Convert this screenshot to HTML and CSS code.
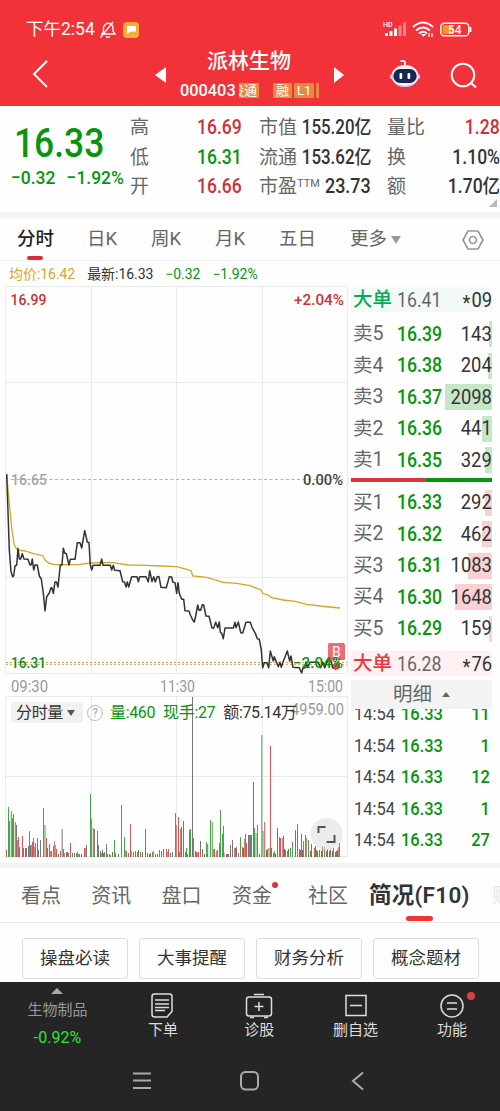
FILE: index.html
```html
<!DOCTYPE html>
<html lang="zh-CN">
<head>
<meta charset="utf-8">
<title>派林生物 000403</title>
<link rel="stylesheet" href="styles.css">
</head>
<body>
<header class="header">
  <div class="status">
    <span class="clock">下午2:54</span>
    <svg class="mute" width="18" height="18" viewBox="0 0 18 18" fill="none" stroke="#fff" stroke-width="1.3"><path d="M3 13h13l-2-3V7a4.600 4.600 0 0 0-8-3.200L4.500 6v4L3 13zM1.500 16.500 14 1M7 15.500q2 1.500 4 0"/></svg>
    <svg width="16" height="16" viewBox="0 0 16 16"><rect width="16" height="16" rx="4" fill="#fbac38"/><path d="M4 4h9v5.500H8L4 12z" fill="#fff"/></svg>
    <svg class="signals" width="92" height="20" viewBox="0 0 92 20">
      <text x="0" y="7" class="hd">HD</text>
      <g fill="#fff"><rect x="2" y="13" width="3" height="3"/><rect x="6.500" y="11" width="3" height="5"/><rect x="11" y="8.500" width="3" height="7.500"/></g>
      <g fill="#fff" opacity=".4"><rect x="15.500" y="5.500" width="3" height="10.500"/><rect x="20" y="2.500" width="3" height="13.500"/></g>
      <g fill="none" stroke="#fff" stroke-width="2"><path d="M30 7q10-9 20 0M33 10.500q7-6 14 0M36 13.500q4-3.500 8 0"/></g><path d="m38 14 2.500 3 2.500-3z" fill="#fff"/><path d="M46 13v4M49 13v4" stroke="#fff" stroke-width="1.200"/>
      <rect x="57.800" y="3.200" width="28" height="12.500" rx="3.500" fill="none" stroke="#fff" stroke-width="1.400"/><path d="M61 5h9v9h-9q-1.500 0-1.500-2V7q0-2 1.500-2z" fill="#f8981d"/><path d="M87.500 7v5" stroke="#fff" stroke-width="1.800"/>
      <text x="65" y="14" class="batt">54</text>
    </svg>
  </div>
  <div class="titlebar">
    <svg class="back" width="18" height="28" viewBox="0 0 18 28" fill="none" stroke="#fff" stroke-width="2"><path d="M15 1 2 14l13 13"/></svg>
    <svg class="prev" width="11" height="16" viewBox="0 0 11 16"><path d="M11 0v16L0 8z" fill="#fff"/></svg>
    <div class="name">
      <h1>派林生物</h1>
      <div class="code"><span class="codenum">000403</span><span class="tag cut"><i>股通</i></span><span class="tag gap">融</span><span class="tag">L1</span><span class="tag sliver"></span></div>
    </div>
    <svg class="next" width="11" height="16" viewBox="0 0 11 16"><path d="M0 0v16l10-8z" fill="#fff"/></svg>
    <svg class="robot" width="32" height="30" viewBox="0 0 32 30"><path d="M11.500 2.200q4-1.200 4.500 1.300v4" fill="none" stroke="#fff" stroke-width="1.800"/><ellipse cx="16" cy="17" rx="13.500" ry="11" fill="#f7f0fb"/><circle cx="3.500" cy="17.500" r="2.600" fill="#d8c3ef"/><circle cx="28.500" cy="17.500" r="2.600" fill="#e9c9f0"/><path d="M6 24q10 6 20 0-3 4-10 4T6 24" fill="#c5b5ef"/><rect x="4.500" y="10" width="23" height="14" rx="6.500" fill="#192650"/><rect x="10.500" y="14" width="2.700" height="6" rx="1" fill="#fff"/><rect x="18.500" y="14" width="2.700" height="6" rx="1" fill="#fff"/></svg>
    <svg class="search" width="28" height="28" viewBox="0 0 28 28" fill="none" stroke="#fff" stroke-width="2"><circle cx="13" cy="13" r="11.300"/><path d="m20.500 20.500 5.500 5"/></svg>
  </div>
</header>

<section class="quote">
  <div class="price"><div class="last"><b>16.33</b></div><div class="chg"><span>−0.32</span><span>−1.92%</span></div></div>
  <div class="stat s1"><p>高<b class="red">16.69</b></p><p>低<b class="green">16.31</b></p><p>开<b class="red">16.66</b></p></div>
  <div class="stat s2"><p>市值<b>155.20亿</b></p><p>流通<b>153.62亿</b></p><p><span>市盈<sup>TTM</sup></span><b>23.73</b></p></div>
  <div class="stat s3"><p>量比<b class="red">1.28</b></p><p>换<b>1.10%</b></p><p>额<b>1.70亿</b></p></div>
  <i class="corner"></i>
</section>

<nav class="periods">
  <span class="on">分时</span><span>日K</span><span>周K</span><span>月K</span><span>五日</span><span class="more">更多<i></i></span>
  <svg width="22" height="20" viewBox="0 0 22 20" fill="none" stroke="#999" stroke-width="1.700"><path d="M6 1h10l5 9-5 9H6L1 10z"/><circle cx="11" cy="10" r="3.500"/></svg>
</nav>
<div class="info"><span class="gold">均价:16.42</span><span>最新:16.33</span><span class="green">−0.32</span><span class="green">−1.92%</span></div>

<main class="market">
  <div class="charts">
    <svg width="350" height="578" viewBox="0 285 350 578">
      <g class="grid"><path d="M5.500 286.500h342v387H5.500zM5.500 382.500h342M5.500 577.500h342M91.500 286v387M176.500 286v387M262.500 286v387M5.500 696.500h342v160H5.500zM5.500 776.500h342M91.500 697v160M176.500 697v160M262.500 697v160"/></g>
      <path d="M11 479.500h332" stroke="#b2b2b2" stroke-dasharray="3 2.500"/>
      <path d="M6 662.500h341" stroke="#d89a5b" stroke-dasharray="2 2"/><path d="M6 664.500h341" stroke="#c8b578" stroke-dasharray="2 2"/>
      <polyline class="avg" points="6.700,474 9.300,503 11.700,528 14.300,545 17.300,550 25,551 33.300,553.700 42.700,555.700 45,560 49.300,563.300 55,564.700 78.300,564.700 90,563 100,562.700 113,562.700 128.300,565 146.700,565.300 162,566 176.700,566.700 186.700,569.300 191,570.700 192.700,576 206.700,577.300 223.300,582.300 236.700,583.300 250,585.700 260.700,589.700 262.700,593.300 269,595.300 270.700,597.300 283.300,600 295,601.300 306.700,604.300 320,606 340,608"/>
      <polyline class="trend" points="6.700,474.300 9.300,550 11,571.700 12.700,576.700 13.700,576 15,566 16.700,565 18,548.300 19.300,559 20.700,559 22.300,553.700 24,559 28,559.300 30,565 31.300,564.700 32.300,559 33.700,570 35,565 37.300,565 39.300,576 41.300,579 43.300,593 45,611 46.700,596.700 49.300,593 51,587.700 52,588 53.300,593.300 55,582 56.500,582 58,587 60.300,565 62,565 63.300,548.300 64.700,553 66.300,553.700 69,565 70.300,559.300 75,559.300 77.300,542.700 80,542.700 81.700,548 84.700,530.700 87.300,542 89,542.700 90.300,565 91.700,570 93,565.300 100,565.300 101.700,559 103,565.300 110.300,565.300 111.700,570 113.300,565.300 114.700,570.300 120,570.700 122.700,581.700 124.500,582 126,587 127.300,582 128.700,587 131.700,576.700 137,576.700 138.300,581.700 139.700,576.700 146,576.700 148.300,582 149.700,570.700 152,581.700 153.700,576.700 155.300,582 157.300,576.500 159,576.700 161,587.300 166.300,587.700 169.300,576.700 171.700,577 172.700,582 175,582.700 176.700,593.300 178,582.700 179.300,593.300 181.700,599.300 183.700,599.300 185,610.700 189,611 190.700,615.700 192.700,620 194.300,622 195.700,616 197.700,605 199,610.300 200.700,610.300 202.300,604.700 203.700,605 206,616 209,616.300 212,628 213.700,628 215.700,622.300 217.700,627.700 219.300,622 220.300,632.300 221.700,633.300 223.300,638.700 225,628 233.300,628 235,622.300 236,627.700 238.300,622 240.700,632.700 242.700,633 246,622.300 250.300,622.300 252,627.300 255.300,633.300 257.300,638.700 259.300,639.300 261.300,650 262.700,667.700 264.300,662.700 267,662.700 268.700,667.700 270.300,651 272,656.700 273.300,661 274.300,656.700 276.700,662.700 278.300,666.700 280,662.300 281.300,667.300 283,662 285,657 287.300,651 288.700,656.700 289.700,661 291,656 293,667.300 299.300,667.700 301.700,673 303,668 304.500,668 306,662 307.300,667.700 310,662.300 318,662.300 320.700,667.700 322.700,662.300 324.700,667.700 327,662.300 330,656.700 332.700,667.700 335.700,669 338,662.300"/>
      <g class="axis">
        <text x="10.500" y="305" fill="#cf3038" textLength="36" lengthAdjust="spacingAndGlyphs">16.99</text><text x="294" y="305" fill="#cf3038" textLength="50" lengthAdjust="spacingAndGlyphs">+2.04%</text>
        <text x="11" y="484.500" fill="#a5a5a5" textLength="36" lengthAdjust="spacingAndGlyphs">16.65</text><text x="303" y="484.500" fill="#444" textLength="40" lengthAdjust="spacingAndGlyphs">0.00%</text>
        <text x="11" y="667.500" fill="#079510" textLength="35" lengthAdjust="spacingAndGlyphs">16.31</text>
        <rect x="328" y="643" width="17" height="17" rx="1.500" fill="#ee6c73"/><circle cx="336.500" cy="666" r="3.500" fill="#ee3d43"/><text x="332" y="656.500" fill="#fff" class="buymark">B</text>
        <text x="293" y="667.500" fill="#079510" textLength="50" lengthAdjust="spacingAndGlyphs">−2.04%</text>
        <g fill="#999" class="times"><text x="11" y="692" textLength="37" lengthAdjust="spacingAndGlyphs">09:30</text><text x="160" y="692" textLength="35" lengthAdjust="spacingAndGlyphs">11:30</text><text x="308" y="692" textLength="35" lengthAdjust="spacingAndGlyphs">15:00</text><text x="291" y="715" textLength="53" lengthAdjust="spacingAndGlyphs">4959.00</text></g>
      </g>
      <g class="bars">
        <path stroke="#49a549" d="M8.500 857v-50M9.500 857v-36M11.300 857v-46M12.500 857v-39M13.500 857v-43M29.500 857v-26M33.500 857v-19M37.500 857v-19M43.500 857v-49M45 857v-32M53.500 857v-11M67.500 857v-5M76.500 857v-4M90.500 857v-63M91.600 857v-38M104.500 857v-5M114.500 857v-17M121.500 857v-52M124.500 857v-20M133.500 857v-5M138.500 857v-7M152.500 857v-5M159.500 857v-7M161.500 857v-6M179.500 857v-5M186.500 857v-9M190.500 857v-28M193.500 857v-19M206.500 857v-15M210.500 857v-37M212.300 857v-35M220.500 857v-47M222.500 857v-23M223.500 857v-31M240.500 857v-20M249.500 857v-22M254.500 857v-29M256 857v-24M257.500 857v-32M261.800 857v-122M263 857v-26M269 857v-9M274.500 857v-6M279.500 857v-20M290.500 857v-9M292.500 857v-15M301.500 857v-23M303.500 857v-16M308.500 857v-17M316.500 857v-7M324.500 857v-10M333.500 857v-9M339.500 857v-14"/>
        <path stroke="#d4575a" d="M6.500 857v-7M15.300 857v-35M18.500 857v-20M22.500 857v-21M32.500 857v-15M35.500 857v-14M46.500 857v-19M49.500 857v-13M51.500 857v-6M56.500 857v-8M60.500 857v-6M63.500 857v-8M70.500 857v-14M77.500 857v-5M84.500 857v-9M93.300 857v-29M103.500 857v-4M107.500 857v-3M115.500 857v-4M126.500 857v-6M130.500 857v-33M135.500 857v-6M140.500 857v-5M150.500 857v-4M155.500 857v-3M166.500 857v-8M168.500 857v-8M175.500 857v-44M178.500 857v-40M185.500 857v-5M196.500 857v-5M198.500 857v-5M202.500 857v-8M207.500 857v-3M214.500 857v-8M217.500 857v-7M219.500 857v-14M226.500 857v-3M235.500 857v-9M242.500 857v-10M245.500 857v-23M246.500 857v-14M251.500 857v-22M264.700 857v-35M267.500 857v-8M270.500 857v-111M280.500 857v-19M283.500 857v-21M287.500 857v-6M300.500 857v-7M305.500 857v-22M314.500 857v-9M322.500 857v-11M330.500 857v-8"/>
        <path stroke="#777" d="M16.500 857v-32M19.500 857v-10M23.500 857v-9M25.500 857v-9M26.500 857v-9M28.500 857v-11M30.500 857v-12M38.500 857v-7M40.500 857v-17M47.500 857v-9M58.500 857v-3M62.200 857v-28M66.500 857v-5M72.500 857v-4M79.500 857v-3M86.500 857v-12M94.500 857v-28M97.500 857v-26M98.500 857v-12M102.500 857v-7M106.500 857v-13M109.500 857v-3M118.500 857v-3M128.500 857v-4M137.500 857v-5M142.500 857v-5M145.500 857v-28M147.500 857v-4M163.500 857v-8M172.500 857v-5M181.500 857v-30M183.500 857v-36M189.500 857v-27M192.500 857V697M195.500 857v-6M200.500 857v-16M207.700 857v-13M224 857v-4M228.500 857v-3M230.500 857v-12M232.500 857v-17M236.500 857v-10M238.500 857v-4M248.500 857v-22M250.500 857v-22M253.500 857v-75M259.500 857v-3M271.500 857v-9M273.500 857v-4M277.500 857v-29M285.500 857v-7M295.500 857v-27M297.500 857v-33M311.500 857v-13M315.500 857v-11M319.500 857v-7M327.500 857v-8M336.500 857v-6"/>
        <path stroke="#df8175" d="M17.500 857v-17M31.500 857v-12M34.500 857v-10M50.500 857v-6M54.500 857v-16M55.500 857v-12M64.500 857v-4M78.500 857v-3M85.500 857v-9M101.500 857v-4M110.500 857v-2M125.500 857v-7M131.500 857v-6M153.500 857v-6M167.500 857v-5M176.500 857v-32M180.500 857v-28M197.500 857v-4M213.500 857v-8M216.500 857v-6M234.500 857v-9M244.500 857v-18M282.500 857v-19M306.500 857v-19M338.500 857v-10"/>
        <path stroke="#697969" d="M68.500 857v-4M74.500 857v-4M81.500 857v-3M100.500 857v-6M112.500 857v-5M149.500 857v-3M157.500 857v-3M170.500 857v-4M187.500 857v-3M204.500 857v-3M227.500 857v-3M243.500 857v-9M266.500 857v-7M275.500 857v-3M284.500 857v-8M288.500 857v-8M299.500 857v-8M302.500 857v-7M310.500 857v-6M317.500 857v-6M321.500 857v-6M326.500 857v-6M329.500 857v-6M332.500 857v-6M335.500 857v-5M337.500 857v-7"/>
      </g>
      <circle cx="326.500" cy="834" r="16" fill="#ddd" opacity=".55"/><path d="M318.500 833v-6h7M334.500 835v7h-8" fill="none" stroke="#555" stroke-width="2"/>
    </svg>
    <div class="volbar"><span class="pick">分时量<i></i></span><span class="help">?</span><span class="green">量:460</span><span class="green">现手:27</span><span>额:75.14万</span></div>
  </div>
  <aside class="book">
    <div class="row big sell"><span>大单</span><b>16.41</b><em><u>*</u>09</em></div>
    <div class="levels asks">
      <div class="row"><span>卖5</span><b>16.39</b><em>143</em><i style="width:3px"></i></div>
      <div class="row"><span>卖4</span><b>16.38</b><em>204</em><i style="width:4px"></i></div>
      <div class="row"><span>卖3</span><b>16.37</b><em>2098</em><i style="width:47px"></i></div>
      <div class="row"><span>卖2</span><b>16.36</b><em>441</em><i style="width:10px"></i></div>
      <div class="row"><span>卖1</span><b>16.35</b><em>329</em><i style="width:7px"></i></div>
    </div>
    <div class="ratio"></div>
    <div class="levels bids">
      <div class="row"><span>买1</span><b>16.33</b><em>292</em><i style="width:7px"></i></div>
      <div class="row"><span>买2</span><b>16.32</b><em>462</em><i style="width:10px"></i></div>
      <div class="row"><span>买3</span><b>16.31</b><em>1083</em><i style="width:24px"></i></div>
      <div class="row"><span>买4</span><b>16.30</b><em>1648</em><i style="width:37px"></i></div>
      <div class="row"><span>买5</span><b>16.29</b><em>159</em><i style="width:3px"></i></div>
    </div>
    <div class="row big buy"><span>大单</span><b>16.28</b><em><u>*</u>76</em></div>
    <div class="detail">明细<i></i></div>
    <div class="ticks">
      <p><span>14:54</span><b>16.33</b><em>11</em></p><p><span>14:54</span><b>16.33</b><em>1</em></p><p><span>14:54</span><b>16.33</b><em>12</em></p><p><span>14:54</span><b>16.33</b><em>1</em></p><p><span>14:54</span><b>16.33</b><em>27</em></p>
    </div>
  </aside>
</main>

<nav class="sections"><span>看点</span><span>资讯</span><span>盘口</span><span class="dot">资金</span><span class="club">社区</span><span class="on">简况(F10)</span><span class="fade">财务</span></nav>
<div class="chips"><span>操盘必读</span><span>大事提醒</span><span>财务分析</span><span>概念题材</span></div>

<footer class="bottom">
  <div class="tools">
    <div class="sector"><i></i><span>生物制品</span><b>-0.92%</b></div>
    <div class="tool"><svg width="26" height="26" viewBox="0 0 26 26"><path d="M4.500 1h15q2.500 0 2.500 2.500v15L17 24H4.500Q2 24 2 21.500v-18Q2 1 4.500 1zM5 7h14M5 11h14M5 14.500h14M5 17.500h10"/></svg>下单</div>
    <div class="tool"><svg width="28" height="26" viewBox="0 0 28 26"><rect x="1.500" y="4" width="25" height="19" rx="2.500"/><path d="M9 1.500h10M14 9v9M9.500 13.500h9M5 24.500h4M19 24.500h4"/></svg>诊股</div>
    <div class="tool"><svg width="26" height="26" viewBox="0 0 26 26"><path d="M3 2.500h20v20H3zM7 12.500h12"/></svg>删自选</div>
    <div class="tool alert"><svg width="26" height="26" viewBox="0 0 26 26"><circle cx="13" cy="13" r="11"/><path d="M8 10h10M8 16h10"/></svg>功能</div>
  </div>
  <svg class="system" width="500" height="30" viewBox="0 0 500 30"><path d="M133 8.500h18M133 15.500h18M133 23h18"/><rect x="241" y="7" width="17" height="17.500" rx="4.500"/><path d="m363 7.500-10 8.500 10 8.500"/></svg>
</footer>
</body>
</html>
```

FILE: styles.css
```css
* { box-sizing: border-box; }
body { margin: 0; width: 500px; height: 1111px; overflow: hidden; background: #fefefe; color: #333; font-family: Roboto, "Noto Sans CJK SC", sans-serif; font-size: 16px; line-height: 1; }
h1, p { margin: 0; font-weight: 400; }
i, em { font-style: normal; }
u { text-decoration: none; }
b { font-weight: 500; }
svg { display: block; flex: none; }
.green { color: #079510 !important; }
.red { color: #cf3038 !important; }
.gold { color: #d9a51d; }

.header { height: 106px; background: #f13238; color: #fff; }
.status { display: flex; align-items: center; height: 48px; padding: 11px 23px 0 26px; }
.clock { font-size: 17.500px; letter-spacing: 0; width: 71px; white-space: nowrap; }
.mute { margin: 0 6px 0 2px; }
.signals { margin-left: auto; margin-right: 2px; }
.hd { font: 500 7px Roboto; fill: #fff; }
.batt { font: 500 12px Roboto; fill: #fff; }
.titlebar { display: flex; align-items: flex-start; height: 58px; }
.back { margin: 12px 0 0 32px; }
.prev { margin: 19px 0 0 105px; }
.name { width: 147px; margin-left: 12px; }
.name h1 { margin: 2px 0 0 29px; font-size: 21px; line-height: 23px; font-weight: 500; white-space: nowrap; }
.code { display: flex; align-items: center; height: 17px; margin-top: 9px; }
.codenum { width: 59px; margin-left: 2px; font-size: 17px; font-weight: 500; transform: scaleX(.96); transform-origin: left; }
.tag { height: 15px; margin-right: 2px; padding: 0 3px; background: #e48b42; font-size: 13px; line-height: 15px; white-space: nowrap; }
.cut { display: flex; justify-content: flex-end; width: 20px; overflow: hidden; padding: 0 2px 0 0; }
.gap { margin-left: 12px; }
.sliver { width: 3px; padding: 0; }
.next { margin: 19px 0 0 9px; }
.robot { margin: 11px 0 0 44px; }
.search { margin: 14px 0 0 29px; }

.quote { position: relative; display: flex; height: 112px; border-bottom: 6px solid #f4f4f4; padding-top: 7px; }
.price { width: 130px; color: #079510; }
.last { height: 51px; padding: 11px 0 0 14px; font-size: 40px; }
.last b { display: inline-block; transform: scaleX(.885); transform-origin: left; }
.chg { display: flex; gap: 12px; padding: 4px 0 0 11px; font-size: 19px; font-weight: 500; white-space: nowrap; transform: scaleX(.92); transform-origin: 11px; }
.stat p { position: relative; display: flex; align-items: center; justify-content: space-between; height: 29.500px; font-size: 19px; color: #666; white-space: nowrap; }
.stat b { font-size: 19.500px; color: #333; transform: scaleX(.9); transform-origin: right; }
.s1 { width: 112px; }
.s2 { width: 112px; margin-left: 17px; }
.s2 b { margin-left: -10px; transform: scaleX(.865); }
.s2 p:last-child b { transform: scaleX(.92); }
.s3 { width: 113px; margin-left: 16px; }
.stat sup { font-size: 11px; vertical-align: 6px; line-height: 0; }
.corner { position: absolute; right: 3px; bottom: 5px; border-left: 8px solid transparent; border-bottom: 8px solid #bbb; }

.periods { display: flex; align-items: center; height: 43px; padding: 1px 16px 0 17px; border-bottom: 1px solid #f2f2f2; font-size: 18.500px; color: #666; white-space: nowrap; }
.periods span { position: relative; width: 64px; }
.periods span:first-child { width: 70px; }
.periods .on { color: #222; font-weight: 500; }
.periods .on::after { content: ""; position: absolute; left: 10px; top: 26px; width: 16px; height: 4px; border-radius: 2px; background: #d82e39; }
.periods span:nth-child(5) { width: 71px; }
.periods .more { display: flex; align-items: center; gap: 4px; width: auto; }
.more i { border: 5px solid transparent; border-top: 8px solid #999; border-bottom: 0; }
.periods svg { margin-left: auto; }
.info { display: flex; align-items: center; gap: 12px; height: 24px; padding: 2px 0 0 9px; font-size: 14px; white-space: nowrap; letter-spacing: -.05px; }

.market { display: flex; height: 578px; }
.charts { position: relative; width: 351px; }
.grid { fill: none; stroke: #e7ebea; }
.avg { fill: none; stroke: #d9a426; stroke-width: 1.300; }
.trend { fill: none; stroke: #333; stroke-width: 1.500; stroke-linejoin: round; }
.axis { font: 500 15px Roboto; }
.buymark { font-size: 14px; font-weight: 400; }
.times { font-size: 16.500px; font-weight: 400; }
.bars { stroke-width: 1; }
.volbar { position: absolute; left: 11px; top: 417px; display: flex; align-items: center; height: 21px; font-size: 16px; white-space: nowrap; color: #333; }
.volbar > span { margin-right: 8px; letter-spacing: -.35px; }
.pick { display: flex; align-items: center; height: 21px; width: 72px; padding-left: 5px; background: #f1f1f1; border-radius: 3px; }
.volbar .pick { margin-right: 4px; }
.volbar .help { margin-right: 7px; }
.pick i { margin-left: 4px; border: 4px solid transparent; border-top: 6px solid #555; border-bottom: 0; }
.help { width: 16px; height: 16px; border: 1px solid #bbb; border-radius: 50%; color: #aaa; font-size: 12px; line-height: 14px; text-align: center; }

.book { width: 141px; padding-top: 2px; }
.row { position: relative; display: flex; align-items: center; height: 31.500px; padding-left: 2px; font-size: 19.500px; color: #666; white-space: nowrap; }
.row span { width: 44px; }
.row b { width: 50px; color: #079510; font-size: 20px; transform: scaleX(.885); transform-origin: left; }
.row em { position: relative; z-index: 1; margin-left: auto; color: #333; font-size: 20px; transform: scaleX(.92); transform-origin: right; }
.row u { display: inline-block; transform: translateY(3px); margin-right: 1px; }
.row i { position: absolute; right: 0; top: 3px; height: 26px; }
.asks i { background: #c5e7c7; }
.bids i { background: #f9d1d3; }
.big b { color: #666; font-weight: 400; }
.big { height: 25px; }
.sell { background: #f1faf6; margin-bottom: 6px; }
.sell span { color: #08a955; font-weight: 500; }
.buy { background: #fff0f1; margin-top: 7px; }
.buy span { color: #e43b3e; font-weight: 500; }
.ratio { height: 4px; margin: 2.500px 0 4.500px; background: linear-gradient(90deg, #dc373f 53%, #079510 53%); }
.detail { display: flex; justify-content: center; align-items: center; gap: 10px; height: 29px; margin-top: 4px; background: #f3f3f3; font-size: 19.500px; color: #666; }
.detail i { border: 4px solid transparent; border-bottom: 5px solid #666; border-top: 0; }
.ticks { height: 153px; overflow: hidden; }
.ticks p { display: flex; align-items: center; height: 31.400px; padding: 0 2px 0 3px; color: #444; font-size: 17.500px; }
.ticks p:first-child { margin-top: -9.500px; }
.ticks span { width: 47px; transform: scaleX(.94); transform-origin: left; }
.ticks b, .ticks em { font-weight: 500; color: #079510; transform: scaleX(.94); transform-origin: left; }
.ticks em { margin-left: auto; transform-origin: right; }

.sections { display: flex; align-items: center; height: 60px; border-top: 5px solid #f3f3f3; border-bottom: 1px solid #e6e6e6; padding: 1px 0 0 21px; font-size: 20px; color: #666; white-space: nowrap; overflow: hidden; }
.sections span { position: relative; flex: none; width: 70.300px; }
.sections .dot { width: 76px; }
.dot::after { content: ""; position: absolute; left: 40px; top: -4px; width: 6px; height: 6px; border-radius: 50%; background: #d5343b; }
.sections .club { width: 61px; }
.sections .on { width: 123px; color: #333; font-size: 22.500px; font-weight: 600; letter-spacing: .3px; }
.sections .on::after { content: ""; position: absolute; left: 37px; top: 32px; width: 27px; height: 5px; border-radius: 3px; background: #ee3737; }
.sections .fade { width: 40px; color: #e6e6e6; }
.chips { display: flex; gap: 11px; height: 59px; padding: 15px 21px 0 22px; }
.chips span { flex: 1; height: 41px; border: 1px solid #ddd; border-radius: 3px; font-size: 17.500px; line-height: 39px; text-align: center; }

.bottom { height: 129px; background: #252525; color: #ddd; }
.tools { display: flex; height: 83px; }
.sector { display: flex; flex-direction: column; align-items: center; width: 115px; padding-top: 6px; }
.sector i { border: 6px solid transparent; border-bottom: 6px solid #aaa; border-top: 0; }
.sector span { margin-top: 9px; font-size: 15px; color: #999; }
.sector b { margin-top: 12px; font-size: 16px; color: #28e832; font-weight: 400; }
.tool { position: relative; display: flex; flex-direction: column; align-items: center; gap: 4px; width: 96.300px; padding-top: 11px; font-size: 15px; }
.tool svg { fill: none; stroke: #ddd; stroke-width: 1.500; }
.alert::after { content: ""; position: absolute; left: 63px; top: 10px; width: 8px; height: 8px; border-radius: 50%; background: #e23c3c; }
.system { fill: none; stroke: #aaa; stroke-width: 2; }
```
